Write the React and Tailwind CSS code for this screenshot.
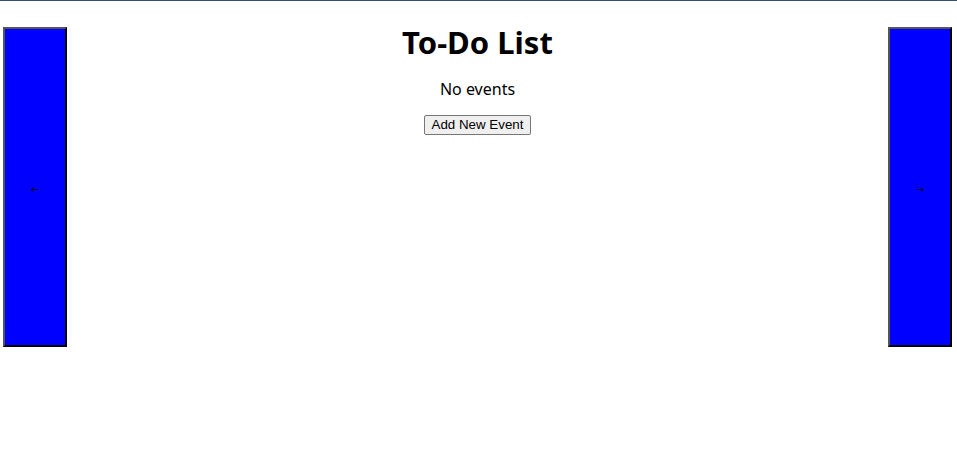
import React from 'react';

const SideButton = ({ arrow }) => (
  <button className="w-16 h-80 bg-[#0000ff] border-2 border-t-[#555555] border-l-[#555555] border-r-black border-b-black flex items-center justify-center p-0">
    <span className="mt-[6px] text-[10px] leading-none text-black font-['DejaVu_Sans',sans-serif]">{arrow}</span>
  </button>
);

const App = () => {
  return (
    <div className="w-[957px] h-[470px] bg-white border-t border-[#34506e] font-['Noto_Sans',sans-serif] text-black">
      <div className="flex items-start justify-between pl-[3px] pr-[5px] pt-[26px]">
        <SideButton arrow="←" />
        <div className="flex-1 flex flex-col items-center">
          <h1 className="text-[31px] font-bold leading-none mt-0">To-Do List</h1>
          <p className="text-base mt-[19px]">No events</p>
          <button className="mt-[14px] px-[7px] py-[1px] text-[13.33px] font-['Liberation_Sans',sans-serif] bg-[#efefef] border border-[#767676] rounded-[2px] leading-[16px]">
            Add New Event
          </button>
        </div>
        <SideButton arrow="→" />
      </div>
    </div>
  );
};

export default App;
